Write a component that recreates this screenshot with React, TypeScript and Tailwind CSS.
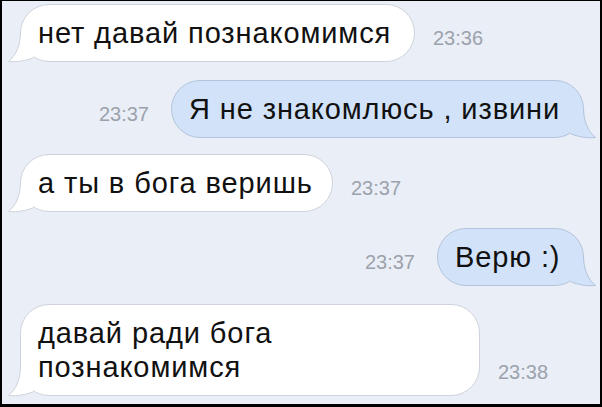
import type { ReactNode } from "react";

const font = { fontFamily: "'Liberation Sans', Arial, sans-serif" };

type Msg = {
  side: "in" | "out";
  text: ReactNode;
  time: string;
  width: string;
  mt: string;
};

const messages: Msg[] = [
  { side: "in", text: "нет давай познакомимся", time: "23:36", width: "w-[395px]", mt: "mt-[3px]" },
  { side: "out", text: "Я не знакомлюсь , извини", time: "23:37", width: "w-[413px]", mt: "mt-[18px]" },
  { side: "in", text: "а ты в бога веришь", time: "23:37", width: "w-[313px]", mt: "mt-[16px]" },
  { side: "out", text: "Верю :)", time: "23:37", width: "w-[147px]", mt: "mt-[16px]" },
  {
    side: "in",
    text: (
      <>
        давай ради бога
        <br />
        познакомимся
      </>
    ),
    time: "23:38",
    width: "w-[460px]",
    mt: "mt-[18px]",
  },
];

function Tail({ out }: { out: boolean }) {
  const fill = out ? "#d2e3f9" : "#ffffff";
  const stroke = out ? "#b3c4dc" : "#cfd4dc";
  return (
    <svg
      width="40"
      height="30"
      viewBox="0 0 40 30"
      className={
        out
          ? "absolute right-[-13px] bottom-[-1px] -scale-x-100 overflow-visible"
          : "absolute left-[-13px] bottom-[-1px] overflow-visible"
      }
    >
      <path d="M12.5 0 C12.5 14 7.5 24 0.5 29.5 C9.5 30.5 17.5 28.5 25 26 L25 0 Z" fill={fill} />
      <path
        d="M12.5 0 C12.5 14 7.5 24 0.5 29.5 C9.5 30.5 17.5 28.5 25 26"
        fill="none"
        stroke={stroke}
        strokeWidth="1"
      />
    </svg>
  );
}

function Bubble({ m }: { m: Msg }) {
  const out = m.side === "out";
  return (
    <div
      className={`relative ${m.width} rounded-[29px] border pl-[17px] py-[11px] text-[29px] leading-[34px] tracking-[0.9px] text-[#111] ${
        out ? "bg-[#d2e3f9] border-[#b3c4dc]" : "bg-white border-[#cfd4dc]"
      }`}
      style={font}
    >
      <Tail out={out} />
      <span className="relative whitespace-nowrap">{m.text}</span>
    </div>
  );
}

function Time({ t }: { t: string }) {
  return (
    <span className="mb-[14px] text-[20px] leading-[20px] text-[#9ca2ab]" style={font}>
      {t}
    </span>
  );
}

export default function App() {
  return (
    <div className="w-[602px] h-[407px] overflow-hidden bg-[#e9eef7] border-black border-l-2 border-r-2 border-t border-b-[3px] flex flex-col">
      {messages.map((m, i) =>
        m.side === "in" ? (
          <div key={i} className={`${m.mt} flex items-end gap-[18px] pl-[18px]`}>
            <Bubble m={m} />
            <Time t={m.time} />
          </div>
        ) : (
          <div key={i} className={`${m.mt} flex items-end justify-end gap-[22px] pr-[16px]`}>
            <Time t={m.time} />
            <Bubble m={m} />
          </div>
        )
      )}
    </div>
  );
}
